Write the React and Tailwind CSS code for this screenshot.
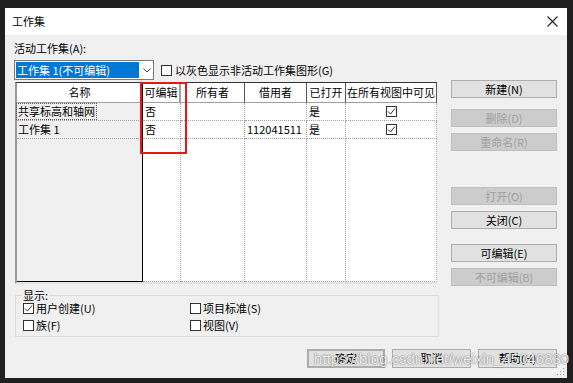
import React from "react";

const FONT = { fontFamily: '"Noto Sans CJK SC", "Noto Sans", sans-serif' };

function Check({ checked, className = "" }) {
  return (
    <span className={"inline-flex w-[11px] h-[11px] border border-[#333333] bg-white items-center justify-center shrink-0 " + className}>
      {checked && (
        <svg width="9" height="9" viewBox="0 0 9 9">
          <path d="M1 4.5 L3.5 7 L8 1.5" fill="none" stroke="#333" strokeWidth="1" />
        </svg>
      )}
    </span>
  );
}

function Btn({ children, disabled, className = "" }) {
  return (
    <div
      className={
        "flex items-center justify-center h-[18px] text-[11px] leading-none border " +
        (disabled
          ? "bg-[#cccccc] border-[#bfbfbf] text-[#a0a0a0] "
          : "bg-[#e1e1e1] border-[#adadad] text-black ") +
        className
      }
    >
      {children}
    </div>
  );
}

const W = [128, 38, 64, 62, 39, 91];

function Row({ cells, focus }) {
  return (
    <div className="flex h-[18px]">
      <div className="w-[126px] bg-[#f0f0f0] border-r border-black border-b border-b-[#a0a0a0] [border-bottom-style:dotted] flex items-center">
        <span
          className={
            "pl-[1px] pr-[1px] leading-[15px] whitespace-nowrap " +
            (focus ? "outline outline-1 outline-dotted outline-[#555]" : "")
          }
        >
          {cells[0]}
        </span>
      </div>
      {cells.slice(1).map((c, i) => (
        <div
          key={i}
          style={{ width: W[i + 1] }}
          className={
            "bg-white border-r border-b border-[#a0a0a0] border-dotted flex items-center whitespace-nowrap " +
            (i === 4 ? "justify-center" : "pl-[2px]")
          }
        >
          {c}
        </div>
      ))}
    </div>
  );
}

export default function App() {
  return (
    <div className="w-[573px] h-[383px] bg-[#202020] pt-[8px] pl-[5px] overflow-hidden" style={FONT}>
      <div className="relative w-[562px] h-[370px] flex flex-col text-[11px] text-black">
        {/* title */}
        <div className="h-[27px] bg-white flex items-center justify-between pl-[7px] pr-[9px] shrink-0">
          <span className="text-[11px]">工作集</span>
          <svg width="11" height="11" viewBox="0 0 11 11">
            <path d="M0.5 0.5 L10.5 10.5 M10.5 0.5 L0.5 10.5" stroke="#222" strokeWidth="1.1" />
          </svg>
        </div>
        {/* body */}
        <div className="flex-1 bg-[#f0f0f0] flex flex-col">
          <div className="flex pl-[9px]">
            {/* left column */}
            <div className="w-[437px] flex flex-col">
              <div className="mt-[3px] h-[20px] leading-[20px]">活动工作集(A):</div>
              <div className="mt-[2px] h-[20px] flex items-center">
                <div className="w-[140px] h-[20px] border border-[#7a7a7a] bg-white flex items-center pl-[1px]">
                  <div className="w-[123px] h-[16px] bg-[#0078d7] text-white flex items-center pl-[1px] whitespace-nowrap leading-none">
                    工作集 1(不可编辑)
                  </div>
                  <svg className="ml-[4px]" width="8" height="5" viewBox="0 0 8 5">
                    <path d="M0.5 0.5 L4 4 L7.5 0.5" fill="none" stroke="#444" strokeWidth="1" />
                  </svg>
                </div>
                <Check className="ml-[7px]" />
                <span className="ml-[3px] whitespace-nowrap">以灰色显示非活动工作集图形(G)</span>
              </div>
              {/* table */}
              <div className="mt-[2px] ml-[1px] w-[422px] h-[202px] flex flex-col border-l-2 border-l-[#9a9a9a] border-t border-t-[#333] border-b-2 border-b-[#e4e4e4] bg-white">
                <div className="flex h-[20px] shrink-0">
                  {["名称", "可编辑", "所有者", "借用者", "已打开", "在所有视图中可见"].map((h, i) => (
                    <div
                      key={h}
                      style={{ width: i === 0 ? 126 : W[i] }}
                      className={
                        "bg-white flex items-center justify-center border-b border-[#a0a0a0] whitespace-nowrap " +
                        (i === 0 ? "border-r border-r-black" : i === 1 ? "border-r-2 border-r-[#a0a0a0]" : "border-r border-r-[#555]")
                      }
                    >
                      {h}
                    </div>
                  ))}
                </div>
                <Row focus cells={["共享标高和轴网", "否", "", "", "是", <Check key="c" checked className="border-[#555]" />]} />
                <Row cells={["工作集 1", "否", "", "112041511", "是", <Check key="c" checked className="border-[#555]" />]} />
                <div className="flex flex-1">
                  <div className="w-[126px] bg-[#f0f0f0] border-r border-b border-black" />
                  {W.slice(1).map((w, i) => (
                    <div key={i} style={{ width: w }} className="bg-white border-r border-b border-[#a0a0a0] border-dotted" />
                  ))}
                </div>
              </div>
              {/* group box */}
              <div className="relative mt-[11px] ml-[1px] w-[424px] h-[42px] border border-[#dcdcdc] pt-[4px]">
                <span className="absolute -top-[9px] left-[6px] bg-[#f0f0f0] px-[1px] leading-[16px]">显示:</span>
                <div className="grid grid-cols-[167px_1fr] pl-[7px]">
                  <div className="h-[17px] flex items-center">
                    <Check checked />
                    <span className="ml-[2px]">用户创建(U)</span>
                  </div>
                  <div className="h-[17px] flex items-center">
                    <Check />
                    <span className="ml-[2px]">项目标准(S)</span>
                  </div>
                  <div className="h-[17px] flex items-center">
                    <Check />
                    <span className="ml-[2px]">族(F)</span>
                  </div>
                  <div className="h-[17px] flex items-center">
                    <Check />
                    <span className="ml-[2px]">视图(V)</span>
                  </div>
                </div>
              </div>
            </div>
            {/* right column */}
            <div className="w-[106px] flex flex-col pt-[45px]">
              <Btn className="h-[17px]">新建(N)</Btn>
              <Btn disabled className="mt-[11px]">删除(D)</Btn>
              <Btn disabled className="mt-[6px]">重命名(R)</Btn>
              <Btn disabled className="mt-[36px]">打开(O)</Btn>
              <Btn className="mt-[6px]">关闭(C)</Btn>
              <Btn className="mt-[15px]">可编辑(E)</Btn>
              <Btn disabled className="mt-[6px]">不可编辑(B)</Btn>
            </div>
          </div>
          {/* bottom buttons */}
          <div className="flex justify-end gap-[7px] pr-[10px] mt-[12px]">
            <Btn className="w-[78px] h-[19px] border-2 border-[#0078d7]">确定</Btn>
            <Btn className="w-[79px] h-[19px]">取消</Btn>
            <Btn className="w-[79px] h-[19px]">帮助(H)</Btn>
          </div>
        </div>
        {/* red annotation */}
        <div className="absolute left-[135px] top-[74px] w-[47px] h-[72px] border-2 border-[#e8161c]" />
        {/* watermark */}
        <div
          className="absolute left-[309px] top-[340px] text-[15px] whitespace-nowrap text-white/90"
          style={{ fontFamily: '"Liberation Sans", Arial, sans-serif', textShadow: "0 0 1px rgba(0,0,0,0.55), 0 0 2px rgba(0,0,0,0.25)" }}
        >
          https://blog.csdn.net/weixin_45046830
        </div>
        {/* grip */}
        <svg className="absolute right-[2px] bottom-[2px]" width="8" height="8" viewBox="0 0 8 8">
          <rect x="6" y="0" width="1" height="1" fill="#999" />
          <rect x="3" y="3" width="1" height="1" fill="#999" />
          <rect x="6" y="3" width="1" height="1" fill="#999" />
          <rect x="0" y="6" width="1" height="1" fill="#999" />
          <rect x="3" y="6" width="1" height="1" fill="#999" />
          <rect x="6" y="6" width="1" height="1" fill="#999" />
        </svg>
      </div>
    </div>
  );
}
